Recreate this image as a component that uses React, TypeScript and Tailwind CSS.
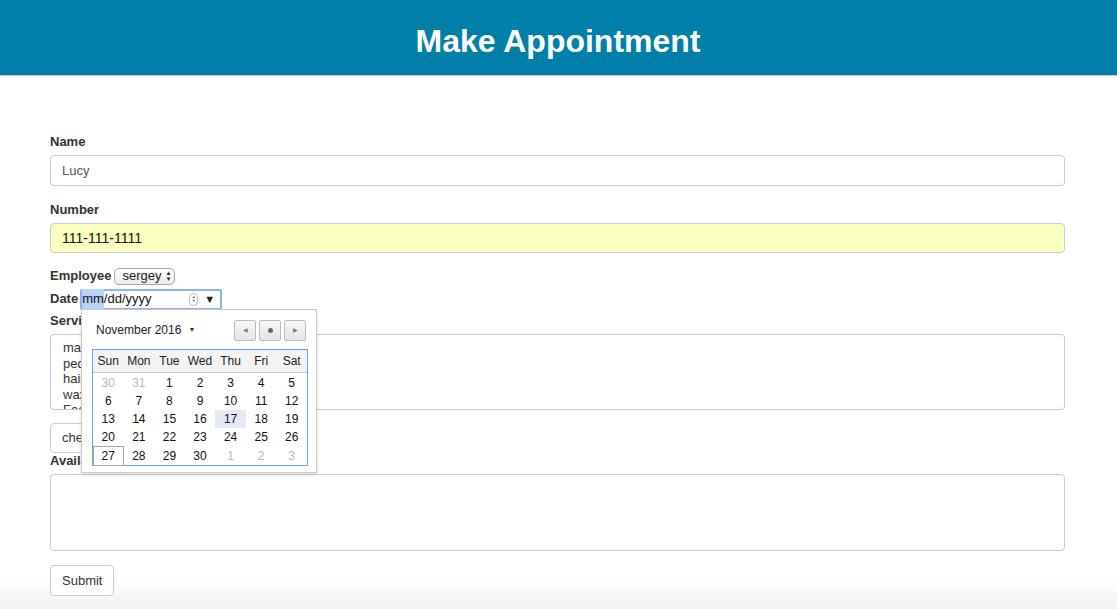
import React from 'react';

const weeks = [
  [30, 31, 1, 2, 3, 4, 5],
  [6, 7, 8, 9, 10, 11, 12],
  [13, 14, 15, 16, 17, 18, 19],
  [20, 21, 22, 23, 24, 25, 26],
  [27, 28, 29, 30, 1, 2, 3],
];
const days = ['Sun', 'Mon', 'Tue', 'Wed', 'Thu', 'Fri', 'Sat'];

function Calendar() {
  return (
    <div className="absolute left-[31px] top-[22px] w-[236px] h-[164px] bg-white border border-[#c8c8c8] shadow-[0_2px_4px_rgba(0,0,0,0.12)] px-[10px] pt-[9px] z-10">
      <div className="flex items-center h-[22px]">
        <span className="text-[12px] text-[#222] ml-[4px]">November 2016</span>
        <span className="ml-[7px] text-[7px] text-[#333]">▼</span>
        <div className="ml-auto flex gap-[3px]">
          <div className="w-[22px] h-[21px] border border-[#bcbcbc] rounded-[2px] bg-gradient-to-b from-[#f8f8f8] to-[#e4e4e4] flex items-center justify-center text-[6px] text-[#777]">◀</div>
          <div className="w-[22px] h-[21px] border border-[#bcbcbc] rounded-[2px] bg-gradient-to-b from-[#f8f8f8] to-[#e4e4e4] flex items-center justify-center">
            <div className="w-[5px] h-[5px] rounded-full bg-[#666]" />
          </div>
          <div className="w-[22px] h-[21px] border border-[#bcbcbc] rounded-[2px] bg-gradient-to-b from-[#f8f8f8] to-[#e4e4e4] flex items-center justify-center text-[6px] text-[#777]">▶</div>
        </div>
      </div>
      <div className="mt-[8px] border border-[#6f9ce8] w-[216px]">
        <div className="grid grid-cols-7 bg-[#f3f3f3] border-b border-[#c8c8c8] h-[23px] items-center">
          {days.map((d) => (
            <div key={d} className="text-center text-[12px] text-[#222]">{d}</div>
          ))}
        </div>
        <div className="pt-[1px] pb-[1px]">
          {weeks.map((w, wi) => (
            <div key={wi} className="grid grid-cols-7 h-[18px]">
              {w.map((n, di) => {
                const other = (wi === 0 && n > 20) || (wi === 4 && n < 10);
                const sel = wi === 2 && n === 17;
                const today = wi === 4 && n === 27;
                return (
                  <div
                    key={di}
                    className={
                      'flex items-center justify-center text-[12px] ' +
                      (other ? 'text-[#b8b8b8] ' : 'text-[#111] ') +
                      (sel ? 'bg-[#e3eaf6] ' : '') +
                      (today ? 'border border-[#a8a8a8] ' : '')
                    }
                  >
                    {n}
                  </div>
                );
              })}
            </div>
          ))}
        </div>
      </div>
    </div>
  );
}

export default function App() {
  return (
    <div className="min-h-[609px] bg-gradient-to-b from-white from-[95%] to-[#f1f1f1] font-['Liberation_Sans',Arial,sans-serif] text-[#333]">
      <header className="h-[76px] bg-[#0080a8] border-b border-[#c9c9c9] flex items-center justify-center">
        <h1 className="text-white text-[32px] font-bold mt-[6px] mr-[1px]">Make Appointment</h1>
      </header>

      <form className="ml-[50px] mr-[52px] pt-[57px] text-[13px]">
        <div className="mb-[15px]">
          <label className="block font-bold mb-[4px] leading-[18px]">Name</label>
          <div className="h-[31px] border border-[#ccc] rounded-[4px] flex items-center px-[11px] text-[#555]">Lucy</div>
        </div>

        <div className="mb-[15px]">
          <label className="block font-bold mb-[4px] leading-[18px]">Number</label>
          <div className="h-[30px] border border-[#ccc] rounded-[4px] flex items-center px-[11px] bg-[#fafebf] text-[#111] text-[14px]">111-111-1111</div>
        </div>

        <div className="flex items-center h-[18px] mt-[-1px]">
          <label className="font-bold">Employee</label>
          <div className="ml-[3px] h-[17px] w-[61px] border border-[#a8a8a8] rounded-[5px] bg-gradient-to-b from-white to-[#ececec] flex items-center pl-[7px] text-[13px] text-[#222]">
            sergey
            <span className="ml-auto mr-[3px] flex flex-col text-[6px] leading-[6px]">
              <span>▲</span>
              <span>▼</span>
            </span>
          </div>
        </div>

        <div className="relative">
          <div className="flex items-center h-[24px] mt-[2px]">
            <label className="font-bold">Date</label>
            <div className="ml-[2px] w-[142px] h-[21px] border-2 border-[#8ab4f0] rounded-[2px] flex items-center text-[13px] text-[#111]">
              <span className="bg-[#b5d3fb]">mm</span>
              <span>/dd/yyyy</span>
              <span className="ml-auto mr-[6px] w-[9px] h-[13px] border border-[#bbb] rounded-full flex flex-col items-center justify-center text-[4px] leading-[4px] text-[#666]">
                <span>▲</span>
                <span>▼</span>
              </span>
              <span className="mr-[5px] text-[11px] text-[#222]">▼</span>
            </div>
          </div>
          <Calendar />

          <div className="mt-[1px]">
            <label className="block font-bold leading-[18px] mb-[4px]">Services</label>
            <div className="h-[76px] border border-[#ccc] rounded-[4px] px-[12px] pt-[5px] overflow-hidden text-[#333] leading-[15.5px]">
              <div>manicure</div>
              <div>pedicure</div>
              <div>haircut</div>
              <div>waxing</div>
              <div>Facial</div>
            </div>
          </div>

          <div className="mt-[13px] w-[160px] h-[30px] border border-[#ccc] rounded-[4px] flex items-center px-[11px] text-[#333]">check availability</div>

          <label className="block font-bold leading-[18px] mt-[-1px] mb-[4px]">Available Times</label>
          <div className="h-[77px] border border-[#ccc] rounded-[4px]" />

          <button type="button" className="mt-[14px] h-[31px] px-[11px] border border-[#ccc] rounded-[4px] bg-white text-[#333] text-[13px]">Submit</button>
        </div>
      </form>
    </div>
  );
}
